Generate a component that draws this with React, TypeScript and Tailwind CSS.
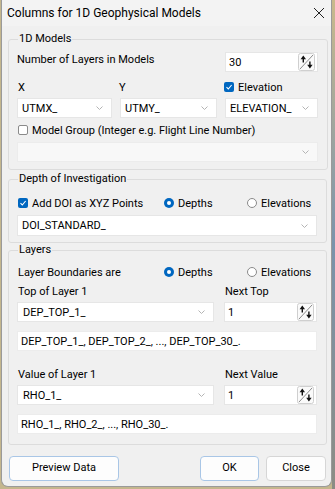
import React from "react";

const font = { fontFamily: 'Roboto, "Noto Sans", sans-serif' };

function Chevron() {
  return (
    <svg width="7" height="4" viewBox="0 0 7 4" className="shrink-0">
      <path d="M0.5 0.5 L3.5 3.5 L6.5 0.5" fill="none" stroke="#b4b4b4" strokeWidth="1" />
    </svg>
  );
}

function SpinIcon() {
  return (
    <svg width="17" height="18" viewBox="0 0 17 18" className="shrink-0">
      <rect x="0.5" y="0.5" width="16" height="17" rx="2" fill="#fafafa" stroke="#cfcfcf" />
      <line x1="2" y1="16" x2="15" y2="2" stroke="#8c8c8c" strokeWidth="1" />
      <path d="M2.6 6.2 L5.3 2.4 L8 6.2 Z" fill="#111" />
      <line x1="5.3" y1="5" x2="5.3" y2="9.5" stroke="#111" strokeWidth="1.4" />
      <path d="M9.2 11.8 L11.9 15.6 L14.6 11.8 Z" fill="#111" />
      <line x1="11.9" y1="8.5" x2="11.9" y2="13" stroke="#111" strokeWidth="1.4" />
    </svg>
  );
}

function Combo({ value, className = "", disabled = false }: { value: string; className?: string; disabled?: boolean }) {
  return (
    <div
      className={`h-[20px] flex items-center justify-between pl-[4px] pr-[8px] border ${
        disabled ? "bg-[#f8f8f8] border-[#ececec]" : "bg-white border-[#e6e6e6]"
      } ${className}`}
    >
      <span className="text-[11px] leading-none text-black">{value}</span>
      <Chevron />
    </div>
  );
}

function Spin({ value }: { value: string }) {
  return (
    <div className="w-[93px] h-[20px] flex items-center justify-between pl-[3px] pr-[2px] bg-white border border-[#e6e6e6]">
      <span className="text-[11px] leading-none text-black">{value}</span>
      <SpinIcon />
    </div>
  );
}

function TextField({ value }: { value: string }) {
  return (
    <div className="h-[20px] flex items-center px-[3px] bg-white border border-[#ececec]">
      <span className="text-[11px] leading-none text-black">{value}</span>
    </div>
  );
}

function Check({ checked, label }: { checked: boolean; label: string }) {
  return (
    <div className="flex items-center gap-[4px] h-[16px]">
      {checked ? (
        <span className="w-[10px] h-[10px] rounded-[2px] bg-[#0067c0] flex items-center justify-center">
          <svg width="8" height="8" viewBox="0 0 8 8">
            <path d="M1.5 4.2 L3.3 6 L6.6 2" fill="none" stroke="#fff" strokeWidth="1.1" />
          </svg>
        </span>
      ) : (
        <span className="w-[10px] h-[10px] rounded-[2px] bg-white border border-[#8a8a8a]" />
      )}
      <span className="text-[11px] leading-none text-black">{label}</span>
    </div>
  );
}

function Radio({ checked, label }: { checked: boolean; label: string }) {
  return (
    <div className="flex items-center gap-[4px] h-[16px]">
      {checked ? (
        <span className="w-[10px] h-[10px] rounded-full bg-[#0067c0] flex items-center justify-center">
          <span className="w-[4px] h-[4px] rounded-full bg-white" />
        </span>
      ) : (
        <span className="w-[10px] h-[10px] rounded-full bg-white border border-[#8a8a8a]" />
      )}
      <span className="text-[11px] leading-none text-black">{label}</span>
    </div>
  );
}

function Group({ title, className = "", children }: { title: string; className?: string; children: React.ReactNode }) {
  return (
    <fieldset className={`w-[319px] border border-[#dcdcdc] rounded-[3px] pl-[8px] pr-[9px] ${className}`}>
      <legend className="ml-[1px] px-[1px] text-[11px] leading-[16px] text-black">{title}</legend>
      {children}
    </fieldset>
  );
}

export default function App() {
  return (
    <div className="w-[335px] h-[489px] flex bg-[#c4b68d] overflow-hidden" style={font}>
      <div className="ml-[1px] w-[331px] h-[487px] flex flex-col bg-[#f0f0f0] border-l border-r border-b border-[#9a9a9a] rounded-b-[7px] overflow-hidden">
        {/* title bar */}
        <div className="h-[26px] shrink-0 flex items-center justify-between bg-[#f3f3f3] pl-[5px] pr-[6px]">
          <span className="text-[12px] leading-none text-black">Columns for 1D Geophysical Models</span>
          <svg width="12" height="12" viewBox="0 0 12 12">
            <path d="M1 1 L11 11 M11 1 L1 11" stroke="#222" strokeWidth="1" />
          </svg>
        </div>

        <div className="flex flex-col pl-[6px]">
          <Group title="1D Models" className="mt-[5px] pb-[7px]">
            <div className="mt-[5px] h-[20px] flex justify-between">
              <span className="text-[11px] leading-[14px] text-black pt-[1px]">Number of Layers in Models</span>
              <Spin value="30" />
            </div>
            <div className="mt-[7px] h-[16px] flex items-center">
              <span className="w-[102px] pl-[1px] text-[11px] leading-none text-black">X</span>
              <span className="w-[105px] text-[11px] leading-none text-black">Y</span>
              <Check checked label="Elevation" />
            </div>
            <div className="mt-[3px] flex gap-[8px]">
              <Combo value="UTMX_" className="w-[95px]" />
              <Combo value="UTMY_" className="w-[97px]" />
              <Combo value="ELEVATION_" className="w-[93px]" />
            </div>
            <div className="mt-[4px] pl-[1px]">
              <Check checked={false} label="Model Group (Integer e.g. Flight Line Number)" />
            </div>
            <Combo value="" disabled className="mt-[4px]" />
          </Group>

          <Group title="Depth of Investigation" className="mt-[1px] pb-[6px]">
            <div className="mt-[8px] h-[16px] flex items-center pl-[1px]">
              <div className="w-[146px]">
                <Check checked label="Add DOI as XYZ Points" />
              </div>
              <div className="w-[83px]">
                <Radio checked label="Depths" />
              </div>
              <Radio checked={false} label="Elevations" />
            </div>
            <Combo value="DOI_STANDARD_" className="mt-[4px] h-[21px]" />
          </Group>

          <Group title="Layers" className="-mt-[1px] pb-[10px]">
            <div className="mt-[6px] h-[16px] flex items-center pl-[1px]">
              <span className="w-[146px] text-[11px] leading-none text-black">Layer Boundaries are</span>
              <div className="w-[83px]">
                <Radio checked label="Depths" />
              </div>
              <Radio checked={false} label="Elevations" />
            </div>
            <div className="mt-[3px] h-[16px] flex items-center pl-[1px]">
              <span className="w-[207px] text-[11px] leading-none text-black">Top of Layer 1</span>
              <span className="text-[11px] leading-none text-black">Next Top</span>
            </div>
            <div className="mt-[3px] flex justify-between">
              <Combo value="DEP_TOP_1_" className="w-[197px] pl-[5px]" />
              <Spin value="1" />
            </div>
            <div className="mt-[9px]">
              <TextField value="DEP_TOP_1_, DEP_TOP_2_, ..., DEP_TOP_30_." />
            </div>
            <div className="mt-[15px] h-[16px] flex items-center pl-[1px]">
              <span className="w-[207px] text-[11px] leading-none text-black">Value of Layer 1</span>
              <span className="text-[11px] leading-none text-black">Next Value</span>
            </div>
            <div className="mt-[3px] flex justify-between">
              <Combo value="RHO_1_" className="w-[197px] pl-[5px]" />
              <Spin value="1" />
            </div>
            <div className="mt-[9px]">
              <TextField value="RHO_1_, RHO_2_, ..., RHO_30_." />
            </div>
          </Group>

          <div className="mt-[11px] flex items-center pl-[1px]">
            <button className="w-[110px] h-[25px] bg-[#fdfdfd] border border-[#a9c6e6] rounded-[4px] text-[11px] text-black">
              Preview Data
            </button>
            <button className="ml-[81px] w-[59px] h-[25px] bg-[#fdfdfd] border border-[#a9c6e6] rounded-[4px] text-[11px] text-black">
              OK
            </button>
            <button className="ml-[7px] w-[60px] h-[25px] bg-[#fdfdfd] border border-[#d6d6d6] rounded-[4px] text-[11px] text-black">
              Close
            </button>
          </div>
        </div>
      </div>
      <div className="w-[3px] h-[489px] bg-gradient-to-b from-[#c9b98b] via-[#7a93ab] to-[#8c8c84]" />
    </div>
  );
}
